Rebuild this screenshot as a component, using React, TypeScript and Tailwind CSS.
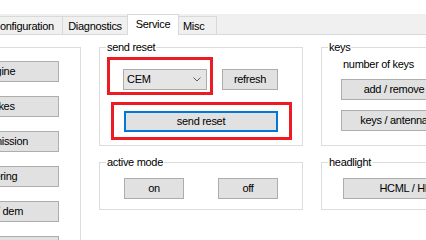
import React from "react";

function Btn({
  children,
  className = "",
}: {
  children?: React.ReactNode;
  className?: string;
}) {
  return (
    <div
      className={`flex h-[21px] shrink-0 items-center justify-center whitespace-nowrap border border-[#adadad] bg-[#e1e1e1] ${className}`}
    >
      {children}
    </div>
  );
}

function Group({
  label,
  className = "",
  children,
}: {
  label?: string;
  className?: string;
  children?: React.ReactNode;
}) {
  return (
    <div className={`relative shrink-0 border border-[#dcdcdc] ${className}`}>
      {label && (
        <span className="absolute -top-[7px] left-[6px] whitespace-nowrap bg-white px-[1px] leading-[13px]">
          {label}
        </span>
      )}
      {children}
    </div>
  );
}

export default function App() {
  return (
    <div className="h-[240px] w-[426px] overflow-hidden bg-white font-['Liberation_Sans',Arial,sans-serif] text-[11px] leading-[13px] tracking-[-0.3px] text-black">
      <div className="h-[14px] bg-white" />
      {/* tab strip */}
      <div className="flex h-[21px] items-end border-b border-[#d9d9d9] bg-[#f0f0f0]">
        <div className="ml-[-17px] h-[18px] w-[80px] shrink-0 border-x border-t border-[#d9d9d9] bg-[#f0f0f0] pt-[3px] text-center whitespace-nowrap">
          Configuration
        </div>
        <div className="ml-[-1px] h-[18px] w-[66px] shrink-0 border-x border-t border-[#d9d9d9] bg-[#f0f0f0] pt-[3px] text-center whitespace-nowrap">
          Diagnostics
        </div>
        <div className="relative z-10 mb-[-1px] ml-[-1px] h-[21px] w-[52px] shrink-0 border-x border-t border-[#d9d9d9] bg-white pt-[3px] text-center whitespace-nowrap">
          Service
        </div>
        <div className="ml-[-1px] h-[18px] w-[39px] shrink-0 border-x border-t border-[#d9d9d9] bg-[#f0f0f0] pt-[3px] pl-[4px] whitespace-nowrap">
          Misc
        </div>
      </div>

      {/* tab page */}
      <div className="flex items-start pt-[12px]">
        {/* left panel */}
        <Group className="ml-[-100px] h-[260px] w-[181px]">
          <div className="ml-[38px] flex flex-col gap-[14px] pt-[13px]">
            <Btn className="w-[120px]">Engine</Btn>
            <Btn className="w-[120px]">brakes</Btn>
            <Btn className="w-[120px]">transmission</Btn>
            <Btn className="w-[120px]">steering</Btn>
            <Btn className="w-[120px]">DIM / dem</Btn>
            <Btn className="w-[120px]">climate</Btn>
          </div>
        </Group>

        {/* middle column */}
        <div className="ml-[18px] flex w-[204px] shrink-0 flex-col">
          <Group label="send reset" className="h-[99px] w-[204px]">
            <div className="ml-[7px] mt-[9px] flex items-start">
              <div className="h-[38px] w-[106px] shrink-0 border-[3px] border-[#ed1c24] pl-[13px] pt-[9px]">
                <div className="flex h-[21px] w-[84px] items-center border border-[#acacac] bg-[#e5e5e5] pl-[3px]">
                  <span>CEM</span>
                  <svg
                    className="ml-auto mr-[5px]"
                    width="8"
                    height="5"
                    viewBox="0 0 8 5"
                  >
                    <path
                      d="M0.5 0.5 L4 4 L7.5 0.5"
                      fill="none"
                      stroke="#5f5f5f"
                      strokeWidth="1"
                    />
                  </svg>
                </div>
              </div>
              <Btn className="ml-[9px] mt-[12px] w-[56px]">refresh</Btn>
            </div>
            <div className="ml-[11px] mt-[7px] h-[38px] w-[181px] border-[3px] border-[#ed1c24] pl-[10px] pt-[6px]">
              <div className="flex h-[21px] w-[154px] items-center justify-center border-2 border-[#0078d7] bg-[#e1e1e1]">
                send reset
              </div>
            </div>
          </Group>
          <Group label="active mode" className="mt-[16px] h-[48px] w-[204px]">
            <div className="ml-[24px] mt-[15px] flex">
              <Btn className="w-[60px]">on</Btn>
              <Btn className="ml-[34px] w-[60px]">off</Btn>
            </div>
          </Group>
        </div>

        {/* right column */}
        <div className="ml-[18px] flex w-[204px] shrink-0 flex-col">
          <Group label="keys" className="h-[99px] w-[204px]">
            <div className="ml-[21px] mt-[10px] whitespace-nowrap">
              number of keys
            </div>
            <Btn className="ml-[19px] mt-[8px] w-[106px]">add / remove</Btn>
            <Btn className="ml-[19px] mt-[10px] w-[106px]">keys / antenna</Btn>
          </Group>
          <Group label="headlight" className="mt-[16px] h-[48px] w-[204px]">
            <Btn className="ml-[21px] mt-[15px] w-[140px]">HCML / HBML</Btn>
          </Group>
        </div>
      </div>
    </div>
  );
}
